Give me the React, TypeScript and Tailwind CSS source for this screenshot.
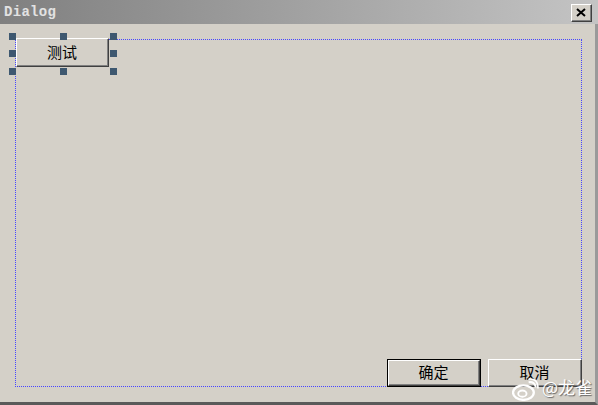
import React from "react"

const cjk = { fontFamily: '"Noto Sans CJK SC", "Liberation Sans", sans-serif' }

function ClassicButton({ label, isDefault, className }: { label: string; isDefault?: boolean; className: string }) {
  return (
    <div className={`${className} ${isDefault ? "border border-black" : ""}`}>
      <div className="h-full w-full border-t border-l border-t-white border-l-white border-r border-b border-r-[#404040] border-b-[#404040]">
        <div
          className="flex h-full w-full items-center justify-center border-r border-b border-r-[#808080] border-b-[#808080] bg-[#d4d0c8] text-[15px] text-black"
          style={cjk}
        >
          {label}
        </div>
      </div>
    </div>
  )
}

function Handle({ className }: { className: string }) {
  return <div className={`absolute h-[7px] w-[7px] bg-[#3e5870] ${className}`} />
}

export default function App() {
  return (
    <div className="flex h-[405px] w-[598px] flex-col overflow-hidden bg-[#d4d0c8]">
      {/* Title bar */}
      <div className="flex h-[24px] shrink-0 items-center justify-between bg-gradient-to-r from-[#808080] to-[#c4c4c4] pl-[4px] pr-[6px]">
        <span
          className="text-[14px] font-bold tracking-[0.3px] text-[#e2e2e2]"
          style={{ fontFamily: '"Liberation Mono", monospace' }}
        >
          Dialog
        </span>
        <div className="mt-[2px] h-[18px] w-[21px] border-t border-l border-t-white border-l-white border-r border-b border-r-[#404040] border-b-[#404040]">
          <div className="flex h-full w-full items-center justify-center border-r border-b border-r-[#808080] border-b-[#808080] bg-[#d4d0c8]">
            <svg width="10" height="9" viewBox="0 0 10 9">
              <path d="M1 1 L9 8 M9 1 L1 8" stroke="#000" strokeWidth="2" />
            </svg>
          </div>
        </div>
      </div>

      {/* Design canvas */}
      <div className="relative flex-1 border-r-[3px] border-b-[3px] border-r-[#9a9a9a] border-b-[#5a5a5a] pl-[15px] pt-[15px]">
        <div className="flex h-[348px] w-[567px] flex-col justify-between border border-dotted border-[#4646ff]">
          {/* selected control with its handles */}
          <div className="relative -mt-[2px] ml-0 w-[93px]">
            <ClassicButton label="测试" className="h-[29px] w-[93px]" />
            <Handle className="-left-[7px] -top-[5px]" />
            <Handle className="left-[44px] -top-[5px]" />
            <Handle className="left-[94px] -top-[5px]" />
            <Handle className="-left-[7px] top-[12px]" />
            <Handle className="left-[94px] top-[12px]" />
            <Handle className="-left-[7px] top-[30px]" />
            <Handle className="left-[44px] top-[30px]" />
            <Handle className="left-[94px] top-[30px]" />
          </div>

          <div className="-mb-px -mr-px flex justify-end gap-[7px]">
            <ClassicButton label="确定" isDefault className="h-[28px] w-[94px]" />
            <ClassicButton label="取消" className="h-[28px] w-[94px]" />
          </div>
        </div>

        {/* watermark */}
        <div className="absolute bottom-[1px] right-[3px] flex items-end gap-[3px] whitespace-nowrap">
          <svg width="27" height="23" viewBox="0 0 26 22" className="shrink-0">
            <ellipse cx="11" cy="14" rx="10" ry="7" fill="none" stroke="#fff" strokeWidth="2.2" />
            <ellipse cx="10" cy="15" rx="4" ry="3" fill="none" stroke="#fff" strokeWidth="1.8" />
            <path d="M16 4 Q22 3 23 9" fill="none" stroke="#fff" strokeWidth="2" />
            <path d="M16 1 Q25 0 25 10" fill="none" stroke="#fff" strokeWidth="1.6" />
          </svg>
          <span
            className="mb-[2px] text-[17px] leading-[24px] text-white [text-shadow:1px_1px_1px_#666]"
            style={cjk}
          >
            @龙雀
          </span>
        </div>
      </div>
    </div>
  )
}
